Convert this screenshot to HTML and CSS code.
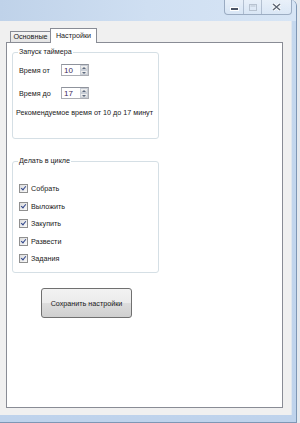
FILE: index.html
```html
<!DOCTYPE html>
<html lang="ru">
<head>
    <meta charset="UTF-8">
    <title>Настройки</title>
    <link rel="stylesheet" href="styles.css">
</head>
<body>
    <div class="window">
        <div class="titlebar">
            <div class="caption-buttons">
                <div class="cap cap-min">
                    <svg width="9" height="4" viewBox="0 0 9 4"><rect x="0.5" y="0.5" width="8" height="3" fill="#4b5566" stroke="#fff" stroke-width="1"/></svg>
                </div>
                <div class="cap cap-max">
                    <svg width="8" height="7" viewBox="0 0 8 7"><rect x="0.5" y="0.5" width="7" height="6" fill="none" stroke="#b7c2d0" stroke-width="1"/><rect x="1.5" y="1.5" width="5" height="1" fill="#b7c2d0"/></svg>
                </div>
                <div class="cap cap-close">
                    <svg width="9" height="8" viewBox="0 0 9 8"><path d="M1 1 L8 7 M8 1 L1 7" stroke="#fff" stroke-width="3"/><path d="M1 1 L8 7 M8 1 L1 7" stroke="#5d6776" stroke-width="1.5"/></svg>
                </div>
            </div>
        </div>
        <div class="client">
            <div class="tabs">
                <div class="tab">Основные</div>
                <div class="tab active">Настройки</div>
            </div>
            <div class="tab-page">
                <fieldset class="group timer">
                    <legend>Запуск таймера</legend>
                    <div class="row">
                        <span class="label">Время от</span>
                        <div class="spin">
                            <span class="spin-value">10</span>
                            <div class="spin-buttons">
                                <div class="spin-btn up"></div>
                                <div class="spin-btn down"></div>
                            </div>
                        </div>
                    </div>
                    <div class="row">
                        <span class="label">Время до</span>
                        <div class="spin">
                            <span class="spin-value">17</span>
                            <div class="spin-buttons">
                                <div class="spin-btn up"></div>
                                <div class="spin-btn down"></div>
                            </div>
                        </div>
                    </div>
                    <div class="hint">Рекомендуемое время от 10 до 17 минут</div>
                </fieldset>

                <fieldset class="group cycle">
                    <legend>Делать в цикле</legend>
                    <label class="check"><span class="box"></span>Собрать</label>
                    <label class="check"><span class="box"></span>Выложить</label>
                    <label class="check"><span class="box"></span>Закупить</label>
                    <label class="check"><span class="box"></span>Развести</label>
                    <label class="check"><span class="box"></span>Задания</label>
                </fieldset>

                <button class="save">Сохранить настройки</button>
            </div>
        </div>
    </div>
</body>
</html>
```

FILE: styles.css
```css
body {
    margin: 0;
    width: 300px;
    height: 423px;
    overflow: hidden;
    background: #e4e9ef;
    font-family: "Liberation Sans", Arial, sans-serif;
    font-size: 7.2px;
    color: #1a1a1a;
}
.window {
    width: 297px;
    height: 423px;
    box-sizing: border-box;
    display: flex;
    flex-direction: column;
    background: linear-gradient(to bottom, #d7e5f5 0px, #c5d8ee 21px, #bfd3ec 100%);
    border-right: 1px solid #7e97b5;
    border-top-right-radius: 6px;
    padding-bottom: 7px;
    border-bottom: 1px solid #7e97b5;
}
.titlebar {
    height: 21px;
    display: flex;
    justify-content: flex-end;
    align-items: flex-start;
    padding-right: 4px;
    background: linear-gradient(to right, #bfd2e9 0%, #cfdff2 50%, #d7e5f5 100%);
    border-top-right-radius: 6px;
}
.caption-buttons {
    display: flex;
    height: 14px;
    border: 1px solid rgba(70, 90, 120, 0.4);
    border-top: none;
    border-radius: 0 0 4px 4px;
    overflow: hidden;
}
.cap {
    height: 14px;
    display: flex;
    align-items: center;
    justify-content: center;
    background: linear-gradient(to bottom, rgba(255,255,255,0.45), rgba(255,255,255,0.1));
}
.cap-min { width: 18px; border-right: 1px solid rgba(70, 90, 120, 0.3); }
.cap-max { width: 17px; border-right: 1px solid rgba(70, 90, 120, 0.3); }
.cap-close { width: 29px; }
.cap-min svg { margin-top: 3px; }

.client {
    flex: 1;
    width: 292px;
    background: #f0f0f0;
    padding: 7px 0 0 6px;
    box-sizing: border-box;
    border-right: 1px solid #dfe6ee;
}
.tabs {
    display: flex;
    align-items: flex-end;
    height: 14px;
    padding-left: 4px;
}
.tab {
    width: 39px;
    height: 10px;
    line-height: 10px;
    box-sizing: content-box;
    text-align: center;
    border: 1px solid #898c95;
    border-bottom: none;
    background: linear-gradient(to bottom, #f4f4f4, #e4e4e4);
    white-space: nowrap;
}
.tab.active {
    width: 45px;
    height: 14px;
    line-height: 14px;
    background: #fff;
    margin-left: -1px;
    margin-bottom: -1px;
    position: relative;
    z-index: 1;
}
.tab-page {
    width: 277px;
    height: 366px;
    box-sizing: border-box;
    background: #fff;
    border: 1px solid #898c95;
    padding: 4px 0 0 5px;
}
.group {
    margin: 0;
    width: 147px;
    min-width: 0;
    box-sizing: border-box;
    border: 1px solid #d5dfe5;
    border-radius: 3px;
    padding: 0 0 0 6px;
}
.group legend {
    padding: 0 1px;
    margin-left: -1px;
    line-height: 10px;
}
.timer {
    height: 92px;
    padding-top: 7px;
}
.row {
    display: flex;
    align-items: center;
    height: 12px;
    margin-bottom: 11px;
}
.label {
    width: 42px;
}
.spin {
    width: 28px;
    height: 12px;
    box-sizing: border-box;
    border: 1px solid #abadb3;
    border-top-color: #8f939c;
    display: flex;
    align-items: center;
    background: #fff;
}
.spin-value {
    flex: 1;
    padding-left: 2px;
    font-size: 8px;
    color: #3b2a5a;
}
.spin-buttons {
    width: 8px;
    height: 10px;
    display: flex;
    flex-direction: column;
}
.spin-btn {
    flex: 1;
    background: linear-gradient(to bottom, #f3f3f3, #dcdcdc);
    border: 1px solid #c9ced6;
    box-sizing: border-box;
    display: flex;
    align-items: center;
    justify-content: center;
}
.spin-btn::after {
    content: "";
    border-left: 2px solid transparent;
    border-right: 2px solid transparent;
}
.spin-btn.up::after { border-bottom: 2px solid #5d6a80; }
.spin-btn.down::after { border-top: 2px solid #5d6a80; }
.hint {
    margin: -2px 0 0 -3px;
    line-height: 10px;
    white-space: nowrap;
}
.cycle {
    margin-top: 17px;
    height: 117px;
    padding-top: 18px;
}
.check {
    display: flex;
    align-items: center;
    height: 9px;
    margin-bottom: 8.5px;
}
.box {
    width: 9px;
    height: 9px;
    box-sizing: border-box;
    border: 1px solid #8f8f8f;
    background: linear-gradient(135deg, #dcdcdc, #fafafa);
    margin-right: 3px;
    position: relative;
}
.box::after {
    content: "";
    position: absolute;
    left: 2px;
    top: 0px;
    width: 2px;
    height: 4px;
    border-right: 1.5px solid #31478b;
    border-bottom: 1.5px solid #31478b;
    transform: rotate(40deg);
}
.save {
    display: block;
    margin: 15px 0 0 29px;
    width: 91px;
    height: 30px;
    border: 1px solid #707070;
    border-radius: 3px;
    background: linear-gradient(to bottom, #f2f2f2 0%, #ebebeb 50%, #dddddd 51%, #cfcfcf 100%);
    font-family: "Liberation Sans", Arial, sans-serif;
    font-size: 7.2px;
    color: #1a1a1a;
    padding: 0;
}
```
